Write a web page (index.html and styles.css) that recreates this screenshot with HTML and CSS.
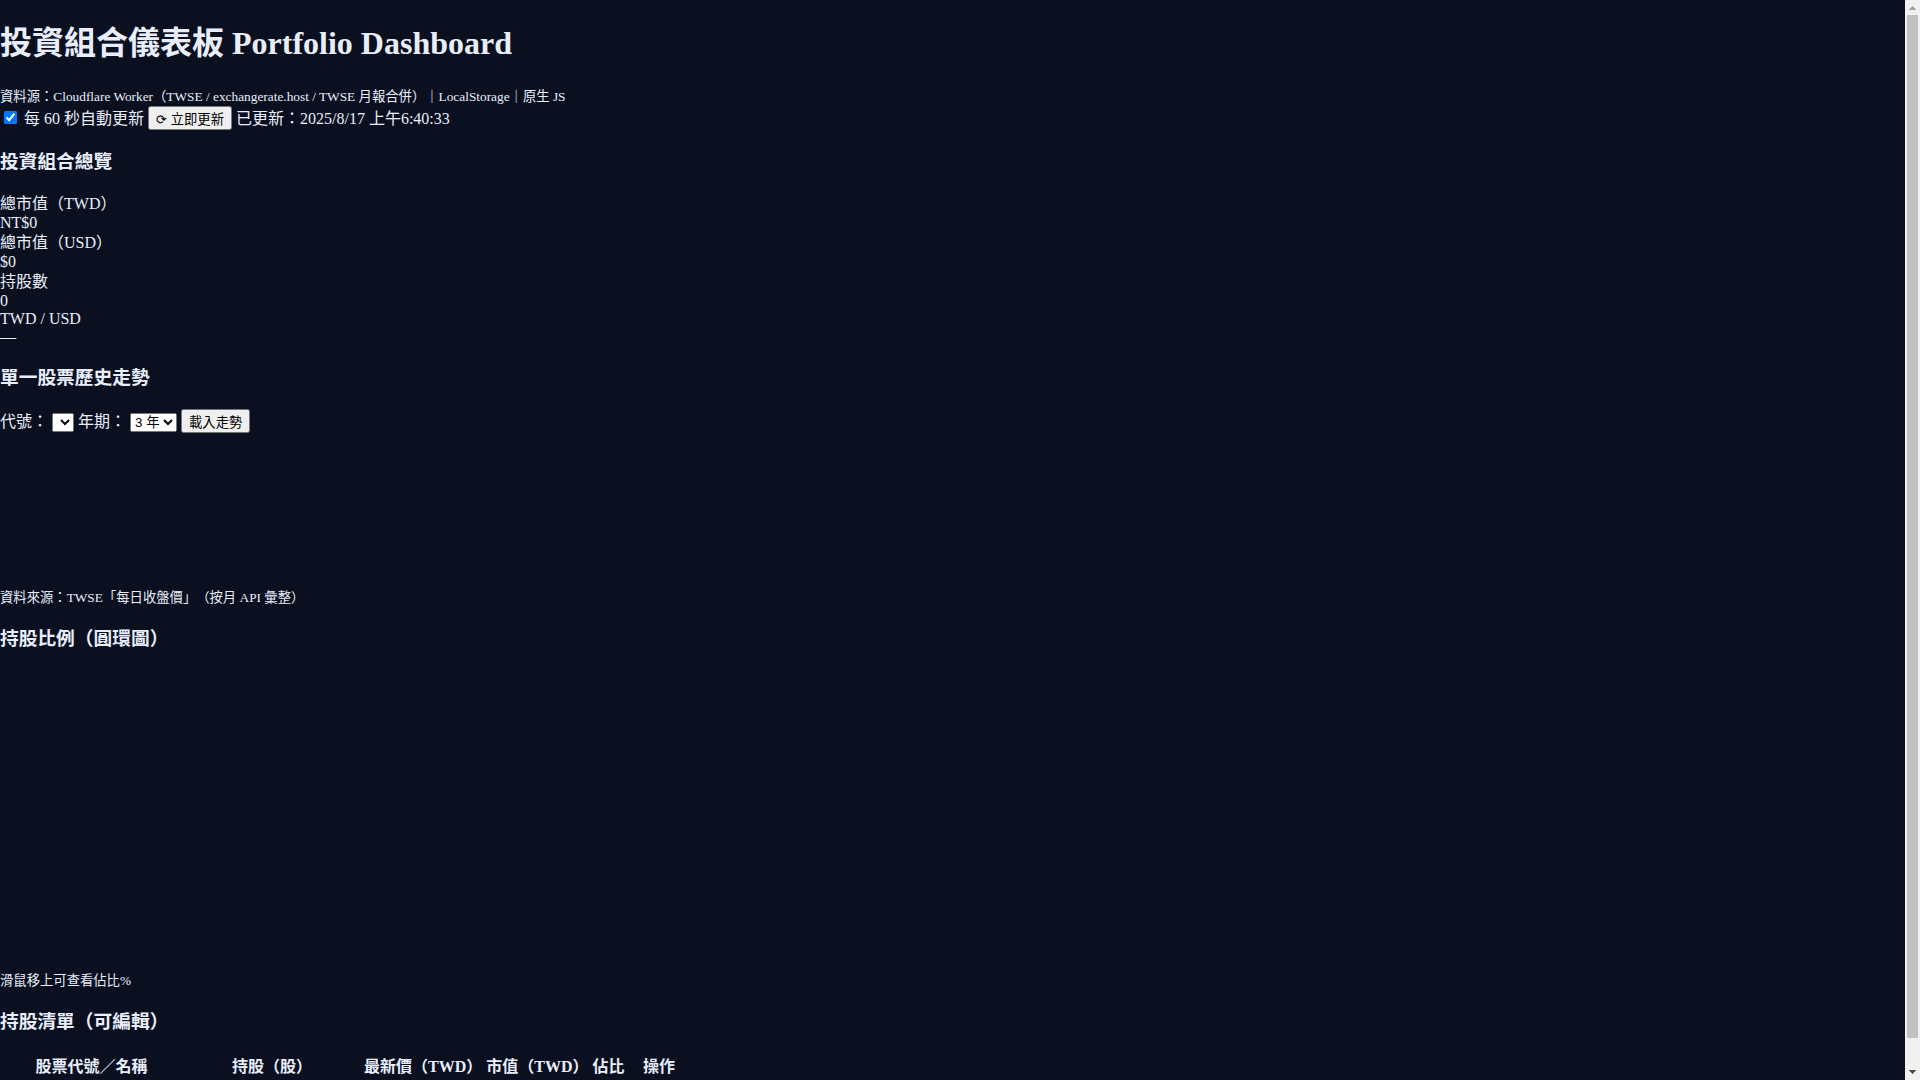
FILE: index.html
```
<!DOCTYPE html>
<html lang="zh-Hant">
<head>
    <meta charset="UTF-8">
    <meta name="viewport" content="width=device-width, initial-scale=1.0">
    <title>投資組合儀表板 Portfolio Dashboard</title>
    <link rel="stylesheet" href="styles.css">
</head>
<body>
    <main class="page">
        <header>
            <h1>投資組合儀表板 Portfolio Dashboard</h1>
            <div class="note"><small>資料源：Cloudflare Worker（TWSE / exchangerate.host / TWSE 月報合併）｜LocalStorage｜原生 JS</small></div>
            <div class="controls">
                <label><input type="checkbox" id="auto" checked> 每 60 秒自動更新</label>
                <button type="button" id="refresh">⟳ 立即更新</button>
                <span id="status">已更新：2025/8/17 上午6:40:33</span>
            </div>
        </header>

        <section>
            <h3>投資組合總覽</h3>
            <div class="kpi">
                <div class="kpi-label">總市值（TWD）</div>
                <div>NT$0</div>
                <div class="kpi-label">總市值（USD）</div>
                <div>$0</div>
                <div class="kpi-label">持股數</div>
                <div>0</div>
                <div>TWD / USD</div>
                <div>—</div>
            </div>
        </section>

        <section>
            <h3>單一股票歷史走勢</h3>
            <div class="controls">
                <label for="symbol">代號：</label>
                <select id="symbol"></select>
                <label for="years">年期：</label>
                <select id="years">
                    <option>1 年</option>
                    <option selected>3 年</option>
                    <option>5 年</option>
                </select>
                <button type="button" id="load">載入走勢</button>
            </div>
            <canvas id="history" class="history-chart"></canvas>
            <div class="note"><small>資料來源：TWSE「每日收盤價」（按月 API 彙整）</small></div>
        </section>

        <section>
            <h3>持股比例（圓環圖）</h3>
            <canvas id="donut" class="donut-chart"></canvas>
            <div class="note"><small>滑鼠移上可查看佔比%</small></div>
        </section>

        <section>
            <h3>持股清單（可編輯）</h3>
            <table class="holdings">
                <thead>
                    <tr>
                        <th class="col-name">股票代號／名稱</th>
                        <th class="col-shares">持股（股）</th>
                        <th>最新價（TWD）</th>
                        <th>市值（TWD）</th>
                        <th>佔比</th>
                        <th class="col-action">操作</th>
                    </tr>
                </thead>
                <tbody></tbody>
            </table>
        </section>
    </main>

    <div class="scrollbar" aria-hidden="true">
        <svg class="arrow-up" width="15" height="15" viewBox="0 0 15 15" shape-rendering="crispEdges"><path d="M4 10V9h1V8h1V7h1V6h1v1h1v1h1v1h1v1z"/></svg>
        <div class="thumb"></div>
        <svg class="arrow-down" width="15" height="15" viewBox="0 0 15 15" shape-rendering="crispEdges"><path d="M4 5v1h1v1h1v1h1v1h1V8h1V7h1V6h1V5z"/></svg>
    </div>
</body>
</html>
```

FILE: styles.css
```
body {
    display: flex;
    height: 100vh;
    margin: 0;
    overflow: hidden;
    background: #0a101f;
    color: #e8eefc;
    font-family: "Liberation Serif", "Noto Sans CJK TC", serif;
    font-size: 16px;
    line-height: 18px;
    text-spacing-trim: space-all;
}
.page {
    flex: 1;
    min-width: 0;
    overflow: hidden;
}
h1 {
    margin: 22px 0;
    font-size: 32px;
    line-height: 42px;
}
h3 {
    margin: 19px 0;
    line-height: 25px;
}
button,
select {
    font-family: "Liberation Sans", "Noto Sans CJK TC", sans-serif;
}
button {
    height: 24px;
}
.controls {
    height: 24px;
    line-height: 24px;
}
.note {
    line-height: 19px;
}
.kpi-label {
    line-height: 21px;
}
.history-chart,
.donut-chart {
    display: block;
}
.history-chart {
    height: 154px;
}
.donut-chart {
    height: 300px;
}
.holdings {
    line-height: 21px;
}
.col-name {
    width: 177px;
}
.col-shares {
    width: 176px;
}
.col-action {
    width: 61px;
}
.scrollbar {
    display: flex;
    flex-direction: column;
    width: 15px;
    background: #f1f1f1;
}
.arrow-up {
    fill: #a3a3a3;
}
.arrow-down {
    fill: #505050;
    margin-top: auto;
}
.thumb {
    flex-basis: calc(95% - 3px);
    margin: 0 2px;
    background: #c1c1c1;
}
```
